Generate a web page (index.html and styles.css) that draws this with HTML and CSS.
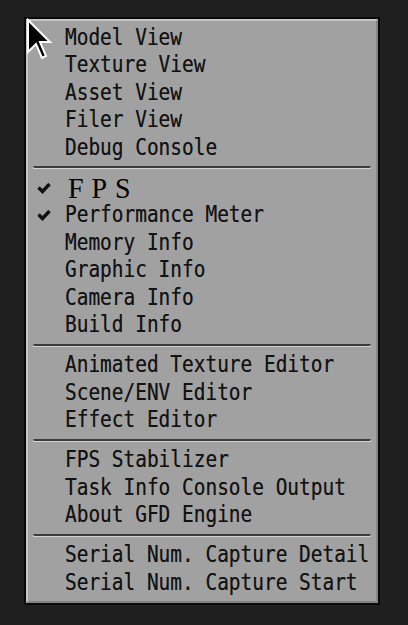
FILE: index.html
```html
<!DOCTYPE html>
<html>
<head>
<meta charset="utf-8">
<link rel="stylesheet" href="styles.css">
</head>
<body>
<div class="menu">
  <div class="menu-inner">
    <div class="row"><span class="mark"></span><span class="label">Model View</span></div>
    <div class="row"><span class="mark"></span><span class="label">Texture View</span></div>
    <div class="row"><span class="mark"></span><span class="label">Asset View</span></div>
    <div class="row"><span class="mark"></span><span class="label">Filer View</span></div>
    <div class="row"><span class="mark"></span><span class="label">Debug Console</span></div>
    <div class="sep"><div class="sep-line"></div></div>
    <div class="row"><span class="mark"><svg class="check" viewBox="0 0 14 11" width="14" height="11"><polyline points="1.5,4.5 5.5,8.5 12.5,1" fill="none" stroke="#101010" stroke-width="3.4"/></svg></span><span class="fps"><span class="fps-ch">F</span><span class="fps-ch">P</span><span class="fps-ch">S</span></span></div>
    <div class="row"><span class="mark"><svg class="check" viewBox="0 0 14 11" width="14" height="11"><polyline points="1.5,4.5 5.5,8.5 12.5,1" fill="none" stroke="#101010" stroke-width="3.4"/></svg></span><span class="label">Performance Meter</span></div>
    <div class="row"><span class="mark"></span><span class="label">Memory Info</span></div>
    <div class="row"><span class="mark"></span><span class="label">Graphic Info</span></div>
    <div class="row"><span class="mark"></span><span class="label">Camera Info</span></div>
    <div class="row"><span class="mark"></span><span class="label">Build Info</span></div>
    <div class="sep"><div class="sep-line"></div></div>
    <div class="row"><span class="mark"></span><span class="label">Animated Texture Editor</span></div>
    <div class="row"><span class="mark"></span><span class="label">Scene/ENV Editor</span></div>
    <div class="row"><span class="mark"></span><span class="label">Effect Editor</span></div>
    <div class="sep"><div class="sep-line"></div></div>
    <div class="row"><span class="mark"></span><span class="label">FPS Stabilizer</span></div>
    <div class="row"><span class="mark"></span><span class="label">Task Info Console Output</span></div>
    <div class="row"><span class="mark"></span><span class="label">About GFD Engine</span></div>
    <div class="sep"><div class="sep-line"></div></div>
    <div class="row"><span class="mark"></span><span class="label">Serial Num. Capture Detail</span></div>
    <div class="row"><span class="mark"></span><span class="label">Serial Num. Capture Start</span></div>
  </div>
</div>
<svg class="cursor" viewBox="-1 -1 13.5 21" width="27" height="42">
  <path d="M0,0 L0,16 L4,12 L7,19 L9,18 L6,11 L11,11 Z" fill="#000" stroke="#fff" stroke-width="1" stroke-linejoin="miter"/>
</svg>
</body>
</html>
```

FILE: styles.css
```css
html, body {
  margin: 0;
  padding: 0;
}
body {
  background: #1f1f1f;
  padding: 17px 0 0 24px;
  width: 408px;
  height: 625px;
  box-sizing: border-box;
  overflow: hidden;
  position: relative;
}
.menu {
  width: 356px;
  box-sizing: border-box;
  border: 2px solid #0a0a0a;
}
.menu-inner {
  background: #a1a1a1;
  border-top: 2px solid #c6c6c6;
  border-left: 2px solid #c6c6c6;
  border-bottom: 2px solid #858585;
  border-right: 2px solid #858585;
  padding: 2.75px 0 4.5px 0;
}
.row {
  display: flex;
  align-items: center;
  height: 27.5px;
}
.mark {
  width: 37px;
  flex: 0 0 37px;
  display: flex;
  align-items: center;
}
.check {
  display: block;
  margin-left: 9px;
  margin-top: 1px;
}
.label {
  display: inline-block;
  font-family: "DejaVu Sans Mono", monospace;
  font-size: 19.45px;
  line-height: 27.5px;
  color: #121212;
  white-space: pre;
  transform: translateY(0.5px) scaleY(1.15);
  transform-origin: 50% 50%;
  text-shadow: 0 0 0.6px rgba(0,0,0,0.5);
}
.fps {
  display: inline-flex;
  padding-left: 3px;
  font-family: "Liberation Serif", serif;
  font-size: 28px;
  line-height: 27.5px;
  color: #000;
  transform: scaleY(1.08);
}
.fps-ch {
  display: inline-block;
  width: 23.5px;
}
.sep {
  height: 12.5px;
  display: flex;
  flex-direction: column;
  justify-content: center;
  padding: 0 5px;
}
.sep-line {
  height: 0;
  border-top: 2px solid #3c3c3c;
  border-bottom: 1px solid #d2d2d2;
  border-left: 1px solid #d2d2d2;
  border-right: 1px solid #d2d2d2;
}
.cursor {
  position: absolute;
  left: 26px;
  top: 18px;
}
```
